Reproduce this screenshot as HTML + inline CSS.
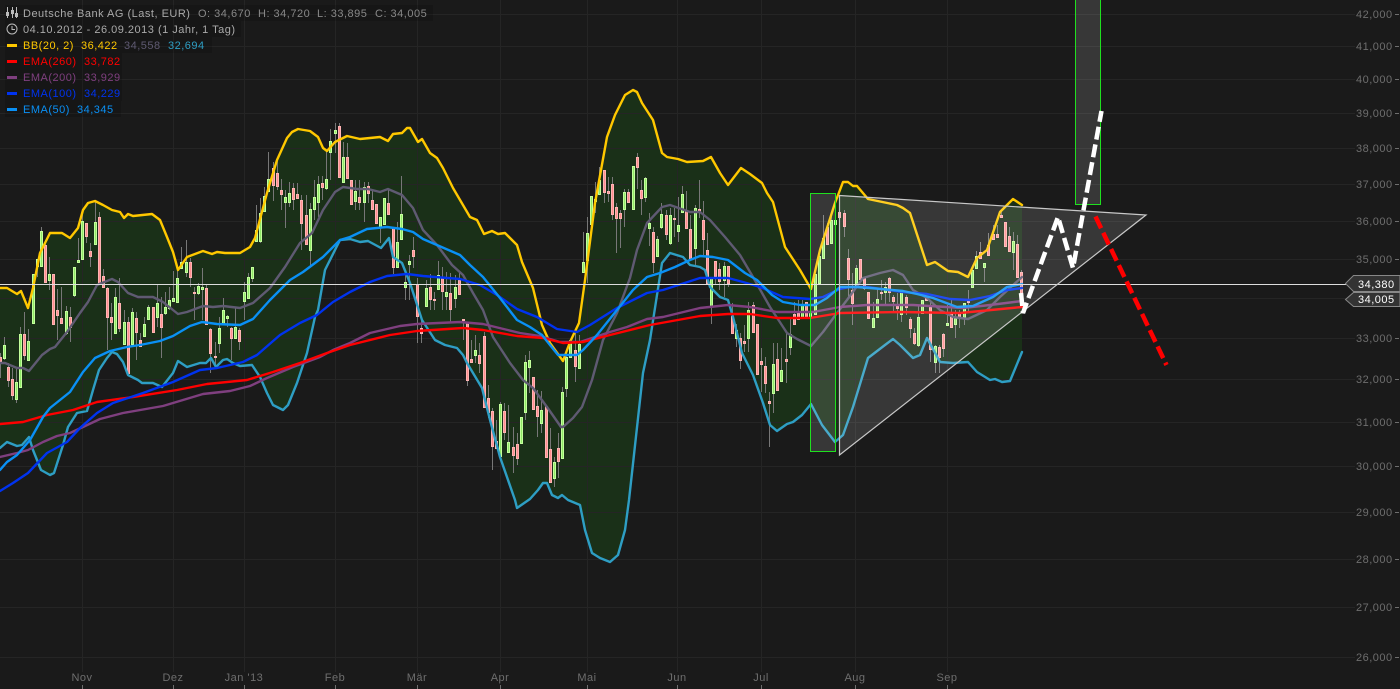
<!DOCTYPE html>
<html><head><meta charset="utf-8"><title>Deutsche Bank AG</title>
<style>html,body{margin:0;padding:0;background:#1a1a1a;width:1400px;height:689px;overflow:hidden}svg{display:block}text{font-family:"Liberation Sans",sans-serif;font-size:11px;letter-spacing:.5px}</style></head><body>
<svg width="1400" height="689" viewBox="0 0 1400 689" xmlns="http://www.w3.org/2000/svg">
<rect width="1400" height="689" fill="#1a1a1a"/>
<path fill="#1a3018" d="M0 288L7 288 17 294 21 291 28 308 33 288 40 253 50 233 62 233 70 238 78 228 83 210 88 203 95 201 103 205 112 210 120 212 124 218 128 214 133 216 152 214 160 220 167 237 173 252 178 270 187 257 203 251 212 254 217 252 225 253 240 253 250 247 255 238 267 193 277 160 287 138 292 132 298 129 310 131 318 137 323 148 327 151 335 142 347 136 360 139 380 137 388 141 393 134 402 133 407 128 410 128 418 142 422 139 430 153 437 158 443 168 453 188 470 217 477 220 484 234 492 231 498 234 505 233 517 245 522 262 533 288 542 325 550 343 563 361 570 342 579 323 585 280 595 203 607 137 615 115 625 95 633 90 637 92 642 103 653 120 662 153 667 157 678 159 687 162 703 161 711 157 720 173 728 185 741 168 750 174 762 183 767 193 773 202 785 247 800 270 811 289 820 250 835 203 843 182 848 182 853 186 857 186 868 199 897 205 903 208 910 213 927 265 935 262 948 271 958 272 968 277 977 258 987 250 1000 212 1013 199 1022 205L1022 352 1010 381 1002 382 995 379 990 380 977 372 968 362 953 363 940 362 927 338 920 355 913 358 900 345 893 339 885 345 868 358 853 407 843 435 835 442 822 425 811 404 802 415 793 422 787 424 777 431 770 425 763 403 753 375 742 353 737 333 733 317 728 300 720 297 710 287 705 270 700 267 690 265 683 257 670 253 662 263 650 340 643 373 629 500 625 530 618 555 610 562 600 558 592 553 585 530 580 505 568 500 562 495 558 498 552 495 547 483 543 483 538 490 530 499 517 508 515 500 500 457 490 420 482 388 467 363 463 355 457 348 445 345 435 340 422 320 410 283 402 263 393 257 389 238 381 248 368 241 360 242 350 239 340 240 325 270 318 310 315 317 307 353 297 383 288 405 283 410 273 405 267 393 260 377 252 365 240 366 233 363 227 359 223 360 216 367 211 358 200 363 187 367 178 361 173 373 162 387 153 383 142 383 138 380 128 375 123 362 117 354 112 352 107 358 99 370 93 390 87 411 77 413 68 427 63 445 54 473 50 475 41 470 33 450 29 437 22 445 17 446 7 442 0 448Z"/>
<path stroke="#252525" stroke-width="1" fill="none" d="M0 14.5H1355M0 46.5H1355M0 79.5H1355M0 113.5H1355M0 148.5H1355M0 184.5H1355M0 221.5H1355M0 259.5H1355M0 298.5H1355M0 338.5H1355M0 379.5H1355M0 422.5H1355M0 466.5H1355M0 512.5H1355M0 559.5H1355M0 607.5H1355M0 657.5H1355M82.5 0V672M173.5 0V672M244.5 0V672M335.5 0V672M417.5 0V672M500.5 0V672M587.5 0V672M677.5 0V672M761.5 0V672M855.5 0V672M947.5 0V672"/>
<path stroke="#777" stroke-width="1" fill="none" d="M.5 353V378M4.5 337V360M8.5 363V387M12.5 368V400M16.5 367V403M20.5 327V388M24.5 312V360M28.5 329V361M37.5 259V277M41.5 227V266M45.5 240V283M49.5 257V290M57.5 289V340M61.5 287V323M66.5 306V335M70.5 307V342M74.5 267V297M78.5 238V263M82.5 210V260M86.5 223V243M90.5 243V267M95.5 200V245M99.5 212V283M103.5 269V287M107.5 287V350M111.5 303V340M115.5 288V333M119.5 278V332M124.5 310V345M128.5 317V375M132.5 308V345M136.5 312V360M140.5 333V347M144.5 317V337M148.5 305V320M157.5 285V327M161.5 297V358M165.5 292V315M169.5 287V310M173.5 271V302M177.5 268V302M181.5 247V268M186.5 240V277M190.5 258V287M194.5 287V320M198.5 283V295M202.5 268V320M206.5 285V325M210.5 328V373M215.5 342V368M219.5 317V353M223.5 298V325M227.5 315V327M231.5 327V360M235.5 307V338M239.5 328V350M244.5 282V320M248.5 273V298M252.5 267V282M256.5 205V241M260.5 198V243M264.5 187V212M268.5 152V192M273.5 162V201M277.5 160V190M281.5 179V210M285.5 190V228M289.5 182V207M293.5 183V210M297.5 183V198M301.5 195V250M306.5 195V245M310.5 203V267M314.5 180V220M318.5 176V217M322.5 176V200M326.5 150V190M330.5 129V180M335.5 123V153M339.5 123V177M343.5 142V183M347.5 143V178M355.5 180V210M359.5 180V210M364.5 182V222M368.5 182V203M372.5 190V210M380.5 217V243M388.5 190V215M393.5 227V274M397.5 222V267M401.5 176V240M405.5 270V300M409.5 255V300M413.5 237V268M417.5 278V343M421.5 317V343M426.5 280V307M430.5 274V310M434.5 292V310M438.5 261V290M442.5 267V310M446.5 272V310M450.5 273V322M455.5 275V308M459.5 273V295M463.5 319V340M467.5 322V386M471.5 340V362M475.5 335V363M479.5 343V373M484.5 332V407M488.5 385V418M492.5 408V470M496.5 420V448M500.5 402V457M504.5 403V440M508.5 405V452M513.5 427V473M517.5 433V465M525.5 355V420M529.5 351V393M537.5 390V437M541.5 391V433M550.5 428V482M554.5 457V487M558.5 433V478M562.5 387V458M566.5 355V397M575.5 333V382M579.5 335V368M583.5 232V273M587.5 217V283M595.5 182V213M599.5 167V195M604.5 170V203M608.5 177V202M612.5 177V220M616.5 203V253M620.5 210V248M624.5 189V227M628.5 189V203M637.5 153V189M641.5 180V215M645.5 177V202M649.5 213V246M653.5 227V273M657.5 236V257M661.5 203V229M666.5 210V240M670.5 208V245M674.5 208V237M678.5 197V242M682.5 186V212M686.5 191V228M690.5 215V260M695.5 205V265M699.5 180V218M703.5 201V255M707.5 233V285M711.5 277V324M715.5 261V285M719.5 263V290M724.5 262V297M728.5 266V287M732.5 303V333M736.5 324V347M740.5 333V369M744.5 325V352M748.5 302V352M753.5 302V333M761.5 348V392M765.5 357V393M769.5 392V447M773.5 343V413M777.5 343V390M781.5 348V382M786.5 333V383M790.5 317V355M794.5 302V324M798.5 300V320M802.5 300V318M819.5 250V283M823.5 215V258M827.5 223V244M831.5 213V243M835.5 210V225M839.5 203V217M844.5 210V237M848.5 249V298M852.5 273V325M856.5 265V287M864.5 277V290M873.5 302V328M877.5 288V317M881.5 280V300M885.5 282V305M889.5 277V302M893.5 295V313M897.5 293V320M901.5 292V322M906.5 295V315M910.5 317V338M914.5 328V345M918.5 305V347M930.5 302V362M935.5 345V373M939.5 345V373M943.5 333V357M947.5 305V325M951.5 300V327M955.5 310V338M959.5 310V328M964.5 303V325M968.5 290V312M976.5 251V268M980.5 242V258M984.5 263V282M988.5 233V255M993.5 225V240M997.5 225V237M1001.5 210V218M1009.5 227V251M1013.5 232V270M1017.5 235V277M1021.5 270V307"/>
<path fill="#8fe868" stroke="#c4ff9c" stroke-width="1" d="M3.5 345.5h2V358.5h-2zM15.5 382.5h2V399.5h-2zM19.5 334.5h2V387.5h-2zM27.5 341.5h2V360.5h-2zM32.5 274.5h2V323.5h-2zM36.5 259.5h2V266.5h-2zM40.5 231.5h2V266.5h-2zM48.5 274.5h2V280.5h-2zM65.5 311.5h2V333.5h-2zM73.5 267.5h2V295.5h-2zM77.5 260.5h2V262.5h-2zM81.5 221.5h2V259.5h-2zM94.5 222.5h2V244.5h-2zM114.5 297.5h2V333.5h-2zM123.5 322.5h2V344.5h-2zM131.5 312.5h2V344.5h-2zM143.5 324.5h2V336.5h-2zM147.5 307.5h2V319.5h-2zM156.5 303.5h2V317.5h-2zM164.5 307.5h2V313.5h-2zM168.5 300.5h2V308.5h-2zM172.5 298.5h2V301.5h-2zM176.5 278.5h2V302.5h-2zM180.5 262.5h2V268.5h-2zM185.5 262.5h2V272.5h-2zM197.5 286.5h2V293.5h-2zM201.5 287.5h2V289.5h-2zM218.5 328.5h2V343.5h-2zM222.5 310.5h2V323.5h-2zM226.5 316.5h2V318.5h-2zM234.5 327.5h2V338.5h-2zM243.5 292.5h2V301.5h-2zM247.5 277.5h2V298.5h-2zM251.5 267.5h2V278.5h-2zM255.5 230.5h2V241.5h-2zM259.5 213.5h2V241.5h-2zM263.5 196.5h2V211.5h-2zM267.5 179.5h2V191.5h-2zM284.5 197.5h2V202.5h-2zM288.5 193.5h2V202.5h-2zM309.5 209.5h2V250.5h-2zM313.5 197.5h2V209.5h-2zM317.5 184.5h2V202.5h-2zM325.5 179.5h2V188.5h-2zM329.5 141.5h2V152.5h-2zM334.5 130.5h2V133.5h-2zM342.5 157.5h2V182.5h-2zM354.5 191.5h2V201.5h-2zM363.5 187.5h2V202.5h-2zM379.5 217.5h2V227.5h-2zM383.5 198.5h2V224.5h-2zM396.5 242.5h2V267.5h-2zM400.5 214.5h2V239.5h-2zM404.5 282.5h2V287.5h-2zM408.5 261.5h2V264.5h-2zM425.5 288.5h2V306.5h-2zM437.5 275.5h2V289.5h-2zM445.5 292.5h2V296.5h-2zM454.5 287.5h2V298.5h-2zM474.5 350.5h2V355.5h-2zM499.5 404.5h2V456.5h-2zM507.5 442.5h2V452.5h-2zM520.5 417.5h2V443.5h-2zM524.5 362.5h2V412.5h-2zM528.5 360.5h2V367.5h-2zM540.5 410.5h2V423.5h-2zM553.5 462.5h2V478.5h-2zM561.5 392.5h2V458.5h-2zM565.5 357.5h2V388.5h-2zM569.5 340.5h2V357.5h-2zM578.5 344.5h2V368.5h-2zM582.5 262.5h2V272.5h-2zM586.5 233.5h2V260.5h-2zM590.5 196.5h2V224.5h-2zM594.5 199.5h2V201.5h-2zM598.5 180.5h2V194.5h-2zM623.5 192.5h2V209.5h-2zM632.5 166.5h2V209.5h-2zM644.5 178.5h2V197.5h-2zM648.5 223.5h2V228.5h-2zM656.5 239.5h2V256.5h-2zM660.5 214.5h2V227.5h-2zM669.5 215.5h2V243.5h-2zM677.5 225.5h2V231.5h-2zM681.5 194.5h2V212.5h-2zM694.5 208.5h2V248.5h-2zM710.5 278.5h2V306.5h-2zM723.5 266.5h2V280.5h-2zM735.5 330.5h2V338.5h-2zM747.5 310.5h2V338.5h-2zM772.5 364.5h2V393.5h-2zM780.5 370.5h2V381.5h-2zM789.5 334.5h2V347.5h-2zM801.5 305.5h2V317.5h-2zM809.5 313.5h2V317.5h-2zM814.5 274.5h2V314.5h-2zM818.5 256.5h2V283.5h-2zM822.5 238.5h2V258.5h-2zM830.5 220.5h2V243.5h-2zM834.5 220.5h2V224.5h-2zM855.5 268.5h2V285.5h-2zM872.5 318.5h2V327.5h-2zM876.5 299.5h2V317.5h-2zM884.5 287.5h2V292.5h-2zM900.5 292.5h2V314.5h-2zM917.5 317.5h2V345.5h-2zM921.5 300.5h2V313.5h-2zM934.5 346.5h2V362.5h-2zM946.5 323.5h2V325.5h-2zM954.5 318.5h2V324.5h-2zM963.5 303.5h2V317.5h-2zM971.5 270.5h2V287.5h-2zM975.5 256.5h2V268.5h-2zM983.5 263.5h2V267.5h-2zM1012.5 241.5h2V252.5h-2z"/>
<path fill="#ff8f8f" stroke="#ffb4b4" stroke-width="1" d="M-.5 357.5h2V361.5h-2zM7.5 367.5h2V380.5h-2zM11.5 379.5h2V395.5h-2zM23.5 334.5h2V355.5h-2zM44.5 245.5h2V282.5h-2zM52.5 274.5h2V324.5h-2zM56.5 310.5h2V315.5h-2zM60.5 318.5h2V323.5h-2zM69.5 317.5h2V327.5h-2zM85.5 223.5h2V236.5h-2zM89.5 251.5h2V256.5h-2zM98.5 217.5h2V283.5h-2zM102.5 276.5h2V287.5h-2zM106.5 288.5h2V317.5h-2zM110.5 317.5h2V322.5h-2zM118.5 303.5h2V328.5h-2zM127.5 322.5h2V373.5h-2zM135.5 318.5h2V332.5h-2zM139.5 340.5h2V346.5h-2zM152.5 307.5h2V332.5h-2zM160.5 314.5h2V327.5h-2zM189.5 262.5h2V277.5h-2zM193.5 292.5h2V293.5h-2zM205.5 288.5h2V324.5h-2zM209.5 329.5h2V353.5h-2zM214.5 356.5h2V357.5h-2zM230.5 328.5h2V338.5h-2zM238.5 330.5h2V341.5h-2zM272.5 168.5h2V185.5h-2zM276.5 173.5h2V186.5h-2zM280.5 190.5h2V194.5h-2zM292.5 188.5h2V199.5h-2zM296.5 194.5h2V198.5h-2zM300.5 200.5h2V223.5h-2zM305.5 215.5h2V244.5h-2zM321.5 183.5h2V187.5h-2zM338.5 126.5h2V177.5h-2zM346.5 157.5h2V178.5h-2zM350.5 180.5h2V204.5h-2zM358.5 197.5h2V202.5h-2zM367.5 186.5h2V193.5h-2zM371.5 200.5h2V209.5h-2zM375.5 204.5h2V223.5h-2zM387.5 203.5h2V214.5h-2zM392.5 228.5h2V267.5h-2zM412.5 250.5h2V256.5h-2zM416.5 284.5h2V316.5h-2zM420.5 328.5h2V333.5h-2zM429.5 287.5h2V299.5h-2zM433.5 299.5h2V300.5h-2zM441.5 278.5h2V291.5h-2zM449.5 293.5h2V309.5h-2zM458.5 280.5h2V294.5h-2zM462.5 319.5h2V320.5h-2zM466.5 323.5h2V380.5h-2zM470.5 359.5h2V362.5h-2zM478.5 355.5h2V363.5h-2zM483.5 336.5h2V407.5h-2zM487.5 398.5h2V412.5h-2zM491.5 411.5h2V446.5h-2zM495.5 441.5h2V448.5h-2zM503.5 411.5h2V432.5h-2zM512.5 447.5h2V455.5h-2zM516.5 444.5h2V458.5h-2zM532.5 377.5h2V409.5h-2zM536.5 406.5h2V416.5h-2zM545.5 406.5h2V457.5h-2zM549.5 449.5h2V482.5h-2zM557.5 448.5h2V461.5h-2zM574.5 350.5h2V366.5h-2zM603.5 170.5h2V192.5h-2zM607.5 191.5h2V193.5h-2zM611.5 184.5h2V214.5h-2zM615.5 207.5h2V218.5h-2zM619.5 213.5h2V218.5h-2zM627.5 192.5h2V202.5h-2zM636.5 157.5h2V167.5h-2zM640.5 190.5h2V198.5h-2zM652.5 232.5h2V262.5h-2zM665.5 215.5h2V234.5h-2zM673.5 218.5h2V219.5h-2zM685.5 211.5h2V228.5h-2zM689.5 229.5h2V259.5h-2zM698.5 209.5h2V212.5h-2zM702.5 220.5h2V239.5h-2zM706.5 250.5h2V283.5h-2zM714.5 261.5h2V276.5h-2zM718.5 269.5h2V281.5h-2zM727.5 266.5h2V283.5h-2zM731.5 316.5h2V333.5h-2zM739.5 338.5h2V360.5h-2zM743.5 341.5h2V343.5h-2zM752.5 305.5h2V332.5h-2zM756.5 324.5h2V374.5h-2zM760.5 361.5h2V364.5h-2zM764.5 366.5h2V383.5h-2zM768.5 401.5h2V403.5h-2zM776.5 359.5h2V390.5h-2zM785.5 359.5h2V361.5h-2zM793.5 314.5h2V324.5h-2zM797.5 313.5h2V319.5h-2zM805.5 302.5h2V317.5h-2zM826.5 227.5h2V244.5h-2zM838.5 212.5h2V217.5h-2zM843.5 213.5h2V226.5h-2zM847.5 258.5h2V279.5h-2zM851.5 290.5h2V303.5h-2zM859.5 259.5h2V279.5h-2zM863.5 278.5h2V288.5h-2zM867.5 292.5h2V318.5h-2zM880.5 292.5h2V293.5h-2zM888.5 278.5h2V292.5h-2zM892.5 297.5h2V301.5h-2zM896.5 306.5h2V308.5h-2zM905.5 297.5h2V307.5h-2zM909.5 319.5h2V328.5h-2zM913.5 333.5h2V343.5h-2zM925.5 297.5h2V300.5h-2zM929.5 307.5h2V349.5h-2zM938.5 347.5h2V357.5h-2zM942.5 334.5h2V348.5h-2zM950.5 312.5h2V327.5h-2zM958.5 312.5h2V317.5h-2zM967.5 301.5h2V302.5h-2zM979.5 252.5h2V258.5h-2zM987.5 245.5h2V255.5h-2zM992.5 234.5h2V239.5h-2zM996.5 234.5h2V237.5h-2zM1000.5 215.5h2V217.5h-2zM1004.5 222.5h2V246.5h-2zM1008.5 236.5h2V251.5h-2zM1016.5 244.5h2V277.5h-2zM1020.5 272.5h2V307.5h-2z"/>
<g fill="none" stroke-width="2.4" stroke-linejoin="round" stroke-linecap="round">
<path stroke="#2e9ec4" d="M0 448L7 442 17 446 22 445 29 437 33 450 41 470 50 475 54 473 63 445 68 427 77 413 87 411 93 390 99 370 107 358 112 352 117 354 123 362 128 375 138 380 142 383 153 383 162 387 173 373 178 361 187 367 200 363 206 363 211 358 216 367 223 360 227 359 233 363 240 366 252 365 260 377 267 393 273 405 283 410 288 405 297 383 307 353 315 317 318 310 325 270 340 240 350 239 360 242 368 241 381 248 389 238 393 257 402 263 410 283 422 320 435 340 445 345 457 348 463 355 467 363 482 388 490 420 500 457 515 500 517 508 530 499 538 490 543 483 547 483 552 495 558 498 562 495 568 500 580 505 585 530 592 553 600 558 610 562 618 555 625 530 629 500 643 373 650 340 662 263 670 253 683 257 690 265 700 267 705 270 710 287 720 297 728 300 733 317 737 333 742 353 753 375 763 403 770 425 777 431 787 424 793 422 802 415 811 404 822 425 835 442 843 435 853 407 868 358 885 345 893 339 900 345 913 358 920 355 927 338 940 362 953 363 968 362 977 372 990 380 995 379 1002 382 1010 381 1022 352"/>
<path stroke="#5f5a72" d="M0 363L5 363 17 368 23 368 29 371 42 355 50 349 55 347 67 332 80 313 88 302 97 285 112 279 118 282 128 293 138 297 153 297 163 302 178 314 187 312 203 306 213 307 223 306 240 308 253 303 270 288 285 267 300 243 312 233 323 210 335 192 343 187 357 189 368 189 380 192 388 189 402 195 413 208 423 230 437 245 452 265 463 275 473 293 483 310 493 337 510 363 523 380 533 388 547 407 561 427 563 427 573 418 582 407 592 380 603 340 617 313 630 278 637 250 647 223 662 207 670 205 690 212 700 212 710 220 725 237 740 255 753 277 770 307 787 333 797 339 811 346 823 332 837 313 847 300 863 278 880 273 893 270 903 275 913 290 927 298 940 310 953 317 968 319 987 310 1000 297 1022 277"/>
<path stroke="#ffc800" d="M0 288L7 288 17 294 21 291 28 308 33 288 40 253 50 233 62 233 70 238 78 228 83 210 88 203 95 201 103 205 112 210 120 212 124 218 128 214 133 216 152 214 160 220 167 237 173 252 178 270 187 257 203 251 212 254 217 252 225 253 240 253 250 247 255 238 267 193 277 160 287 138 292 132 298 129 310 131 318 137 323 148 327 151 335 142 347 136 360 139 380 137 388 141 393 134 402 133 407 128 410 128 418 142 422 139 430 153 437 158 443 168 453 188 470 217 477 220 484 234 492 231 498 234 505 233 517 245 522 262 533 288 542 325 550 343 563 361 570 342 579 323 585 280 595 203 607 137 615 115 625 95 633 90 637 92 642 103 653 120 662 153 667 157 678 159 687 162 703 161 711 157 720 173 728 185 741 168 750 174 762 183 767 193 773 202 785 247 800 270 811 289 820 250 835 203 843 182 848 182 853 186 857 186 868 199 897 205 903 208 910 213 927 265 935 262 948 271 958 272 968 277 977 258 987 250 1000 212 1013 199 1022 205"/>
<path stroke="#7f3f7f" d="M0 457L17 453 28 450 43 442 57 436 70 433 83 427 100 419 123 413 163 406 183 400 203 394 230 391 250 386 267 378 293 367 320 357 333 350 350 343 370 333 400 326 417 324 460 322 483 324 520 333 540 336 560 342 580 342 610 332 627 327 647 319 663 317 700 308 728 305 750 307 777 312 813 312 840 307 867 305 913 305 963 308 990 305 1022 301"/>
<path stroke="#f00" d="M0 424L23 422 47 415 73 410 97 402 133 397 177 390 207 384 247 380 273 372 300 363 327 353 350 345 390 335 417 331 463 328 483 330 517 336 543 338 563 343 583 342 610 335 650 325 700 316 728 314 750 314 777 318 810 318 840 313 900 312 960 313 1022 307"/>
<path stroke="#0033f0" d="M0 491L13 483 28 473 47 453 67 442 80 428 97 413 113 403 143 393 173 382 200 370 217 368 243 362 257 355 280 335 300 323 317 315 333 302 350 292 370 282 387 276 407 274 423 276 460 279 480 285 497 295 517 309 537 317 557 329 577 332 590 325 617 308 647 293 663 290 700 278 728 278 743 282 760 287 783 297 810 299 823 297 840 289 850 287 867 287 903 292 927 294 950 299 970 300 990 296 1007 290 1022 288"/>
<path stroke="#0a90f5" d="M0 470L7 462 17 455 30 440 43 417 50 408 70 392 83 372 95 358 110 351 127 347 140 345 160 341 173 336 190 326 202 322 217 324 240 325 253 319 270 300 290 280 303 272 323 257 340 240 350 237 367 229 387 227 402 229 413 232 423 239 460 255 470 265 483 277 500 298 517 320 530 327 542 335 550 345 558 355 577 355 583 350 597 335 617 310 633 290 647 277 660 273 675 267 690 260 700 256 713 257 728 260 745 273 757 280 772 295 783 302 800 305 815 305 827 298 840 287 857 287 870 288 903 291 917 294 933 298 957 307 973 306 993 297 1007 287 1022 284"/>
</g>
<path stroke="#ddd" stroke-width="1" d="M0 284.5H1346"/>
<path fill="#fff" fill-opacity=".13" stroke="#1fe01f" stroke-width="1" d="M810.5 193.5H835.5V451.5H810.5Z"/>
<path fill="#fff" fill-opacity=".13" stroke="#1fe01f" stroke-width="1" d="M1075.5 -5H1100.5V204.5H1075.5Z"/>
<path fill="#fff" fill-opacity=".13" stroke="#c8c8c8" stroke-width="1.2" d="M839.5 195.5L1146 215 839.5 455Z"/>
<path fill="none" stroke="#fff" stroke-width="4.5" stroke-dasharray="13 5" d="M1021 293L1023 313 1058 217 1073 268 1101.5 111"/>
<path fill="none" stroke="#f00" stroke-width="4.5" stroke-dasharray="13 5" d="M1095.5 216.5L1166.5 365"/>
<g fill="#000" fill-opacity=".14"><rect x="5" y="5" width="428" height="16"/><rect x="5" y="21" width="236" height="16"/><rect x="5" y="37" width="207" height="16"/><rect x="5" y="53" width="117" height="16"/><rect x="5" y="69" width="117" height="16"/><rect x="5" y="85" width="117" height="16"/><rect x="5" y="101" width="116" height="16"/></g>
<g fill="none" stroke="#bbb" stroke-width="1"><path d="M7.5 7V18M12.5 7V18M16.5 7V18"/><rect x="6.5" y="12.5" width="2" height="3"/><rect x="11.5" y="10.5" width="2" height="3"/><rect x="15.5" y="13.5" width="2" height="3"/><circle cx="12" cy="29" r="5"/><path d="M12 26V29.5H15"/></g>
<g fill="#aaa"><text x="23" y="17">Deutsche Bank AG (Last, EUR)</text><text x="198" y="17" fill="#888">O: 34,670</text><text x="258" y="17" fill="#888">H: 34,720</text><text x="317" y="17" fill="#888">L: 33,895</text><text x="375" y="17" fill="#888">C: 34,005</text><text x="23" y="33">04.10.2012 - 26.09.2013 (1 Jahr, 1 Tag)</text></g>
<rect x="7" y="44" width="10" height="3" fill="#ffc800"/><text x="23" y="49" fill="#ffc800">BB(20, 2)</text><text x="81" y="49" fill="#ffc800">36,422</text><text x="124" y="49" fill="#5f5a72">34,558</text><text x="168" y="49" fill="#2e9ec4">32,694</text>
<rect x="7" y="60" width="10" height="3" fill="#f00"/><text x="23" y="65" fill="#f00">EMA(260)</text><text x="84" y="65" fill="#f00">33,782</text>
<rect x="7" y="76" width="10" height="3" fill="#7f3f7f"/><text x="23" y="81" fill="#7f3f7f">EMA(200)</text><text x="84" y="81" fill="#7f3f7f">33,929</text>
<rect x="7" y="92" width="10" height="3" fill="#0033f0"/><text x="23" y="97" fill="#0033f0">EMA(100)</text><text x="84" y="97" fill="#0033f0">34,229</text>
<rect x="7" y="108" width="10" height="3" fill="#0a90f5"/><text x="23" y="113" fill="#0a90f5">EMA(50)</text><text x="77" y="113" fill="#0a90f5">34,345</text>
<g fill="#6e6e6e"><text x="1356" y="18">42,000</text><text x="1356" y="50">41,000</text><text x="1356" y="83">40,000</text><text x="1356" y="117">39,000</text><text x="1356" y="152">38,000</text><text x="1356" y="188">37,000</text><text x="1356" y="225">36,000</text><text x="1356" y="263">35,000</text><text x="1356" y="342">33,000</text><text x="1356" y="383">32,000</text><text x="1356" y="426">31,000</text><text x="1356" y="470">30,000</text><text x="1356" y="516">29,000</text><text x="1356" y="563">28,000</text><text x="1356" y="611">27,000</text><text x="1356" y="661">26,000</text></g>
<path stroke="#6e6e6e" stroke-width="1" d="M1395 14.5h4M1395 46.5h4M1395 79.5h4M1395 113.5h4M1395 148.5h4M1395 184.5h4M1395 221.5h4M1395 259.5h4M1395 338.5h4M1395 379.5h4M1395 422.5h4M1395 466.5h4M1395 512.5h4M1395 559.5h4M1395 607.5h4M1395 657.5h4M82.5 685v4M173.5 685v4M244.5 685v4M335.5 685v4M417.5 685v4M500.5 685v4M587.5 685v4M677.5 685v4M761.5 685v4M855.5 685v4M947.5 685v4"/>
<path fill="#333" stroke="#888" stroke-width="1" d="M1345.5 283.5L1353.5 275.5H1400V291.5H1353.5Z"/>
<path fill="#333" stroke="#888" stroke-width="1" d="M1345.5 299.5L1353.5 292.5H1400V306.5H1353.5Z"/>
<text x="1358" y="288" fill="#fff">34,380</text><text x="1358" y="303" fill="#fff">34,005</text>
<g fill="#6e6e6e" text-anchor="middle"><text x="82" y="681">Nov</text><text x="173" y="681">Dez</text><text x="244" y="681">Jan '13</text><text x="335" y="681">Feb</text><text x="417" y="681">Mär</text><text x="500" y="681">Apr</text><text x="587" y="681">Mai</text><text x="677" y="681">Jun</text><text x="761" y="681">Jul</text><text x="855" y="681">Aug</text><text x="947" y="681">Sep</text></g>
</svg>
</body></html>
